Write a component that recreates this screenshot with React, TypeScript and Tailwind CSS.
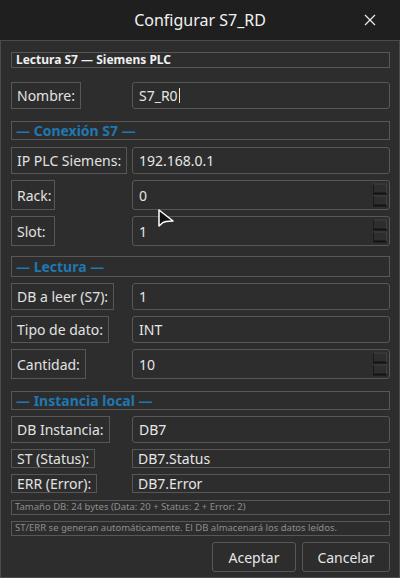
import React from "react";

const font = { fontFamily: '"Noto Sans", "Open Sans", sans-serif' };

function Label({ text, w }: { text: string; w?: string }) {
  return (
    <div className="w-[121px] shrink-0 flex">
      <div
        className={
          "border border-[#575757] px-[5px] flex items-center text-[14px] text-[#e2e2e2] whitespace-nowrap " +
          (w || "")
        }
      >
        {text}
      </div>
    </div>
  );
}

function Spin() {
  return (
    <div className="absolute right-[2px] top-1/2 -translate-y-1/2 flex flex-col gap-[1px]">
      <div className="w-[14px] h-[11px] border border-[#404040] border-b-2 border-b-[#121212] border-l-[#1a1a1a] bg-[#2e2e2e]" />
      <div className="w-[14px] h-[11px] border border-[#404040] border-b-2 border-b-[#121212] border-l-[#1a1a1a] bg-[#2e2e2e]" />
    </div>
  );
}

function Input({
  value,
  spin,
  square,
  cursor,
}: {
  value: string;
  spin?: boolean;
  square?: boolean;
  cursor?: boolean;
}) {
  return (
    <div
      className={
        "relative flex-1 flex items-center border border-[#575757] text-[14px] text-[#e6e6e6] " +
        (square ? "pl-[5px]" : "rounded-[3px] pl-[6px]")
      }
    >
      <span>{value}</span>
      {cursor && <span className="w-px h-[15px] bg-[#e6e6e6] ml-[1px]" />}
      {spin && <Spin />}
    </div>
  );
}

function Row({
  label,
  value,
  h,
  spin,
  square,
  cursor,
  mt,
  lw,
}: {
  label: string;
  value: string;
  h: string;
  spin?: boolean;
  square?: boolean;
  cursor?: boolean;
  mt: string;
  lw?: string;
}) {
  return (
    <div className={"flex " + h + " " + mt}>
      <Label text={label} w={lw} />
      <Input value={value} spin={spin} square={square} cursor={cursor} />
    </div>
  );
}

function Section({ text, h, mt }: { text: string; h: string; mt: string }) {
  return (
    <div
      className={
        "border border-[#575757] pl-[4px] flex items-center text-[14px] font-bold text-[#1f78b0] " +
        h +
        " " +
        mt
      }
    >
      {text}
    </div>
  );
}

function Note({ text, mt }: { text: string; mt: string }) {
  return (
    <div
      className={
        "border border-[#575757] h-[15px] pl-[3px] flex items-center text-[9.5px] text-[#8e8e8e] whitespace-nowrap overflow-hidden " +
        mt
      }
    >
      {text}
    </div>
  );
}

export default function App() {
  return (
    <div className="w-[400px] h-[578px] bg-[#2d2d2d] flex flex-col relative overflow-hidden" style={font}>
      <div className="h-[40px] bg-[#1f1f1f] flex items-center justify-center relative shrink-0">
        <span className="text-[16px] text-[#f2f2f2]">Configurar S7_RD</span>
        <svg className="absolute left-[364px] top-[14px]" width="12" height="12" viewBox="0 0 12 12">
          <path d="M1 1 L11 11 M11 1 L1 11" stroke="#eeeeee" strokeWidth="1.2" />
        </svg>
      </div>
      <div className="flex-1 border border-[#4b4b4b] pl-[10px] pr-[9px] flex flex-col">
        <div className="mt-[11px] h-[16px] border border-[#575757] pl-[4px] flex items-center text-[12px] font-bold text-[#f0f0f0]">
          Lectura S7 — Siemens PLC
        </div>
        <Row label="Nombre:" value="S7_R0" h="h-[27px]" mt="mt-[14px]" cursor />
        <Section text="— Conexión S7 —" h="h-[19px]" mt="mt-[12px]" />
        <Row label="IP PLC Siemens:" value="192.168.0.1" h="h-[27px]" mt="mt-[7px]" />
        <Row label="Rack:" value="0" h="h-[30px]" mt="mt-[6px]" spin lw="w-[44px]" />
        <Row label="Slot:" value="1" h="h-[30px]" mt="mt-[6px]" spin lw="w-[44px]" />
        <Section text="— Lectura —" h="h-[21px]" mt="mt-[10px]" />
        <Row label="DB a leer (S7):" value="1" h="h-[27px]" mt="mt-[6px]" />
        <Row label="Tipo de dato:" value="INT" h="h-[27px]" mt="mt-[6px]" />
        <Row label="Cantidad:" value="10" h="h-[30px]" mt="mt-[6px]" spin />
        <Section text="— Instancia local —" h="h-[19px]" mt="mt-[12px]" />
        <Row label="DB Instancia:" value="DB7" h="h-[27px]" mt="mt-[6px]" />
        <Row label="ST (Status):" value="DB7.Status" h="h-[19px]" mt="mt-[6px]" square />
        <Row label="ERR (Error):" value="DB7.Error" h="h-[19px]" mt="mt-[6px]" square />
        <Note text="Tamaño DB: 24 bytes (Data: 20 + Status: 2 + Error: 2)" mt="mt-[7px]" />
        <Note text="ST/ERR se generan automáticamente. El DB almacenará los datos leídos." mt="mt-[6px]" />
        <div className="flex justify-end gap-[6px] mt-[6px]">
          <div className="w-[84px] h-[30px] border border-[#575757] rounded-[3px] flex items-center justify-center text-[14px] text-[#e6e6e6]">
            Aceptar
          </div>
          <div className="w-[88px] h-[30px] border border-[#575757] rounded-[3px] flex items-center justify-center text-[14px] text-[#e6e6e6]">
            Cancelar
          </div>
        </div>
      </div>
      <svg className="absolute left-[157px] top-[208px]" width="20" height="22" viewBox="0 0 20 22">
        <path d="M2 2 L2 18 L6 14.5 L9 13.5 L16 13 Z" fill="#111" stroke="#fff" strokeWidth="1.5" strokeLinejoin="round" />
      </svg>
    </div>
  );
}
